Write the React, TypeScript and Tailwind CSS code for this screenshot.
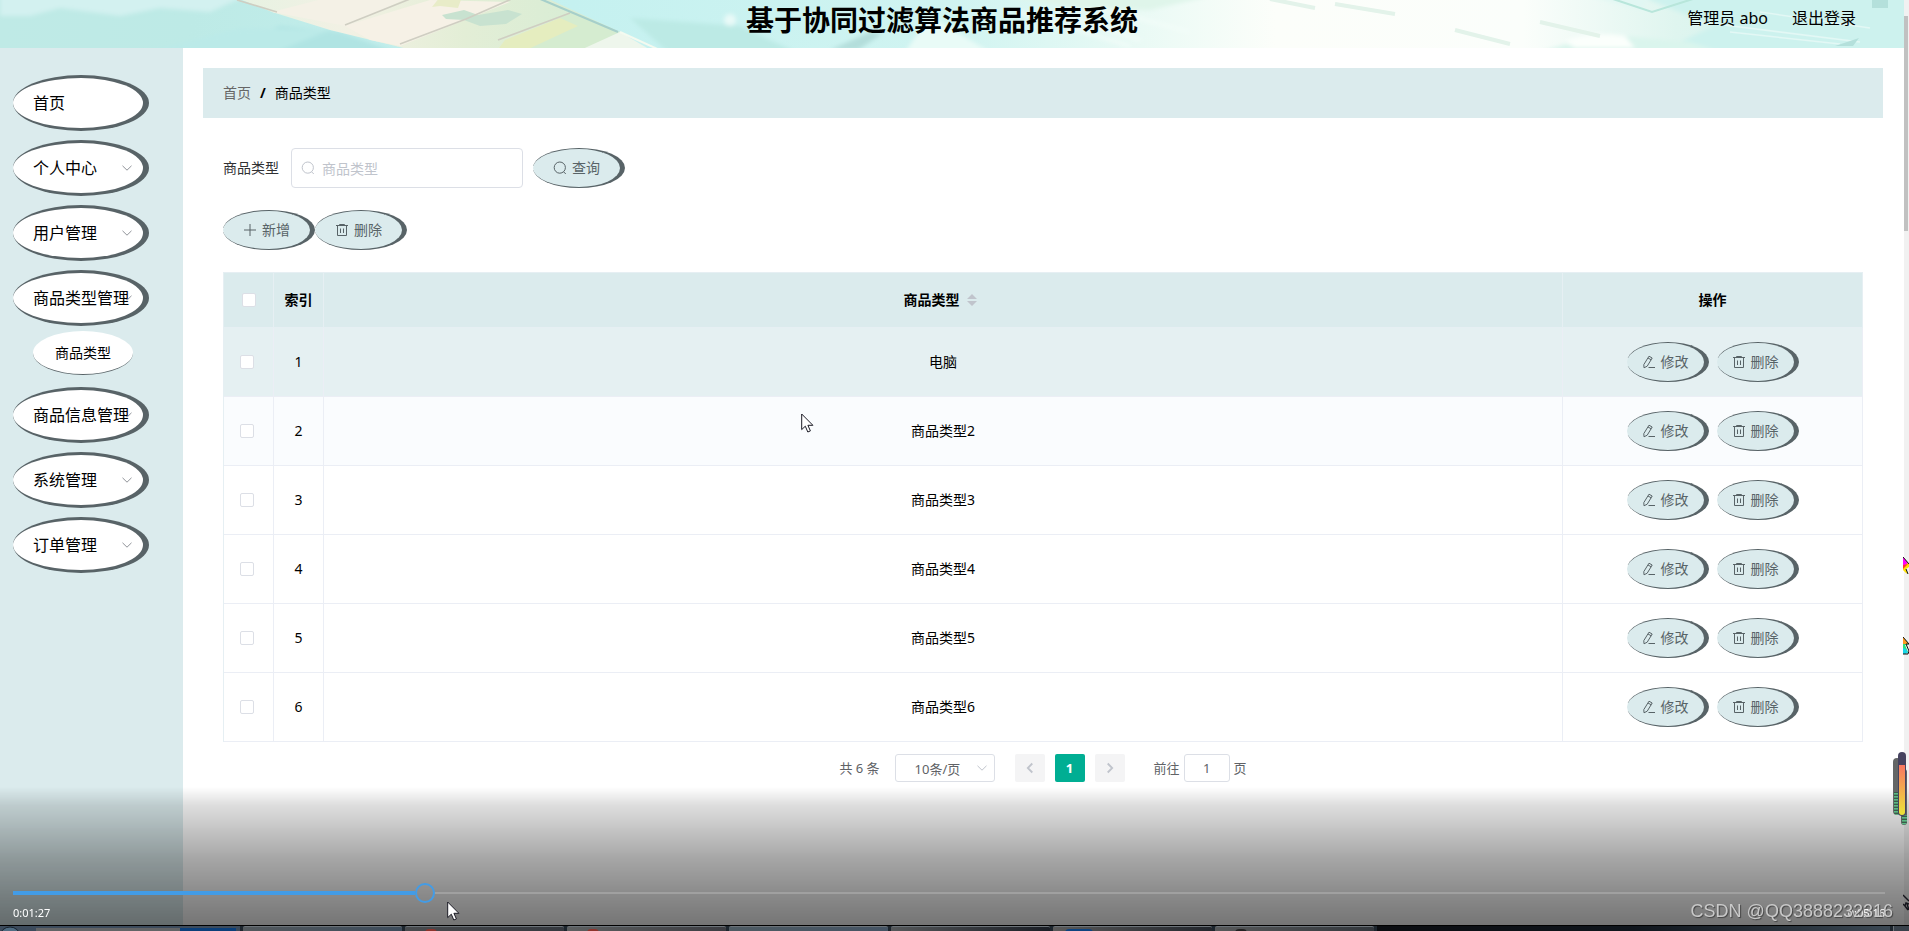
import type { ReactNode } from "react";

type MenuEntry = { label: string; arrow?: boolean; children?: string[] };

const menu: MenuEntry[] = [
  { label: "首页" },
  { label: "个人中心", arrow: true },
  { label: "用户管理", arrow: true },
  { label: "商品类型管理", arrow: true, children: ["商品类型"] },
  { label: "商品信息管理", arrow: true },
  { label: "系统管理", arrow: true },
  { label: "订单管理", arrow: true },
];

const rows = ["电脑", "商品类型2", "商品类型3", "商品类型4", "商品类型5", "商品类型6"];

function SearchIcon() {
  return (
    <svg viewBox="0 0 14 14" className="size-3.5 shrink-0" fill="none" stroke="currentColor">
      <circle cx="6.8" cy="6.6" r="5.6" />
      <path d="M10.6 10.8 12.8 13" />
    </svg>
  );
}

function PlusIcon() {
  return (
    <svg viewBox="0 0 14 14" className="size-3.5 shrink-0" fill="none" stroke="currentColor">
      <path d="M7 1v12M1 7h12" />
    </svg>
  );
}

function TrashIcon() {
  return (
    <svg viewBox="0 0 14 14" className="size-3.5 shrink-0" fill="none" stroke="currentColor">
      <path d="M1 2.5h12M2.5 2.5v10h9v-10M4.5 2.5v-1h5v1M5.5 5.5v4.5M8.5 5.5v4.5" />
    </svg>
  );
}

function EditIcon() {
  return (
    <svg viewBox="0 0 14 14" className="size-3.5 shrink-0" fill="none" stroke="currentColor">
      <path d="M7 1.2 10.2 3 5.2 11.2 2 12.8 1.8 9.6zM6 3l3.2 1.8M6.5 12.5h6.5" strokeLinejoin="round" />
    </svg>
  );
}

function ChevronDown({ className }: { className: string }) {
  return (
    <svg viewBox="0 0 12 12" className={className} fill="none" stroke="currentColor">
      <path d="M1.5 3.8 6 8.2l4.5-4.4" />
    </svg>
  );
}

function OvalButton({ children, wide }: { children: ReactNode; wide?: boolean }) {
  return (
    <button
      type="button"
      className={`flex h-10 shrink-0 items-center gap-[5px] rounded-[50%] border-y border-r-[5px] border-l-0 border-[#586367] bg-[#dbebed] text-sm leading-none whitespace-nowrap text-[#586367] ${wide ? "px-5" : "px-[15px]"}`}
    >
      {children}
    </button>
  );
}

function CheckBox({ label }: { label: string }) {
  return (
    <input
      type="checkbox"
      aria-label={label}
      className="block size-3.5 appearance-none rounded-[2px] border border-[#dcdfe6] bg-white checked:bg-[#00ae93]"
    />
  );
}

function HeaderArt() {
  return (
    <svg viewBox="0 0 1904 48" preserveAspectRatio="none" className="absolute inset-0 size-full" aria-hidden="true">
      <defs>
        <linearGradient id="sky" x1="0" x2="1" y1="0" y2="0">
          <stop offset="0" stopColor="#bfeae6" />
          <stop offset="0.1" stopColor="#bdeae6" />
          <stop offset="0.3" stopColor="#c5f1f0" />
          <stop offset="0.5" stopColor="#d0f4f1" />
          <stop offset="0.6" stopColor="#eafaf5" />
          <stop offset="0.67" stopColor="#fcfefa" />
          <stop offset="0.8" stopColor="#fbfefb" />
          <stop offset="0.88" stopColor="#dff5ef" />
          <stop offset="1" stopColor="#c6eeea" />
        </linearGradient>
        <linearGradient id="field" x1="0" x2="1" y1="0" y2="0">
          <stop offset="0" stopColor="#e6f2e2" />
          <stop offset="0.3" stopColor="#f2f1e4" />
          <stop offset="0.6" stopColor="#e3eed6" />
          <stop offset="1" stopColor="#d4ecd4" />
        </linearGradient>
        <filter id="soft" x="-5%" y="-20%" width="110%" height="140%">
          <feGaussianBlur stdDeviation="2" />
        </filter>
        <filter id="fine" x="-5%" y="-20%" width="110%" height="140%">
          <feGaussianBlur stdDeviation="0.7" />
        </filter>
      </defs>
      <rect width="1904" height="48" fill="url(#sky)" />
      <g filter="url(#soft)">
        <path d="M0-6h250l-40 18-50-4-40 8-60-8-30 8H0z" fill="#d3f1f0" />
        <path d="M200 54l80-28 60 6 60 22z" fill="#b0e4e3" />
        <path d="M140 54l100-26 90 2-60 24z" fill="#bbeae8" />
      </g>
      <g filter="url(#fine)">
        <path d="M232-4h310l78 36-20 20H420L330 30 272 12z" fill="url(#field)" />
        <path d="M345 26 430 0l80 2-110 44-30-6z" fill="#f6f1e6" />
        <path d="M272 12 330-3h80l-64 29z" fill="#f4f1e6" />
        <path d="M500 52 570 12l48 20-38 20z" fill="#d5ecd0" />
        <path d="M505 40 560 18l18 8-56 26h-26z" fill="#e5edbf" />
        <path d="M442 15l22-5 14 5 30-5 14 4-16 10-26 2-16-6-18-1z" fill="#c8e2d0" />
        <path d="M440-3h22l-4 11-18-2-8 1z" fill="#e8ecc8" />
        <path d="M345 25 415-3M400 44l66-25 48-21M498 40 570 13M237 0l40 12" fill="none" stroke="#cfcec2" strokeWidth="1.6" />
        <path d="M538-2l80 34" fill="none" stroke="#a6cfca" strokeWidth="2" />
        <path d="M576 52l44-20 34 20z" fill="#eef6ec" />
        <path d="M620 32l44 20" stroke="#f4faf0" strokeWidth="2" />
      </g>
      <g filter="url(#soft)">
        <path d="M630 18l110 8 60 28H670z" fill="#bceae5" />
        <circle cx="730" cy="20" r="6" fill="#e9faf8" />
        <path d="M830 50l40-18 12 2-24 16z" fill="#b4dedb" />
        <path d="M905 52 930 16l60 36z" fill="#e9fbf7" />
        <path d="M1000-4h210l-60 14-70-2z" fill="#dff5ea" />
        <path d="M1020 12l110 34M1060 14l80 26M1100 8l90 24" stroke="#f3fdf9" strokeWidth="3" />
        <path d="M1640-4h270v58h-256l60-28z" fill="#cdf2ee" />
        <path d="M1540 52l60-18 90 8 30 10z" fill="#daf5ed" />
        <path d="M1565 42q20-12 60-6l10 12h-60z" fill="#fbfffc" />
        <path d="M1590-4h60l-8 14z" fill="#e1f7f3" />
      </g>
      <g filter="url(#fine)" fill="none">
        <path d="M1270-1l45 9M1335 4l60 10M1455 30l55 14M1540 22l60 14" stroke="#e3f3ea" strokeWidth="4" />
        <path d="M1610-2l42 14 44-14" stroke="#b8e6db" strokeWidth="2" />
        <path d="M1700 22l160 20M1730 32l110 12M1760 12l110 16" stroke="#e3f8f5" strokeWidth="1.5" />
        <path d="M1835 46l24-8-6 8zM1872 0h16v8h-16z" fill="#b4e0db" />
      </g>
    </svg>
  );
}

function Header() {
  return (
    <header className="relative h-12 overflow-hidden">
      <HeaderArt />
      <div className="relative grid grid-cols-[1fr_auto_1fr] pr-5">
        <span />
        <h1 className="text-[28px] leading-10 font-bold whitespace-nowrap">基于协同过滤算法商品推荐系统</h1>
        <div className="flex justify-end gap-6 pr-7 text-base leading-9">
          <span>管理员 abo</span>
          <a href="#logout">退出登录</a>
        </div>
      </div>
    </header>
  );
}

function Sidebar() {
  return (
    <nav className="w-[183px] shrink-0 bg-[#dbebed] pt-[27px] pl-[13px]">
      <ul className="flex flex-col">
        {menu.map((m) => (
          <li key={m.label} className={m.children ? "mb-3" : "mb-[9px]"}>
            <a
              href="#menu"
              className="relative flex h-14 w-[136px] items-center rounded-[50%] border-y-[3px] border-r-[6px] border-l-0 border-[#586367] bg-white pl-5 text-base whitespace-nowrap"
            >
              {m.arrow && <ChevronDown className="absolute right-2.5 size-3 text-[#909399]" />}
              <span className="relative">{m.label}</span>
            </a>
            {m.children?.map((c) => (
              <a
                key={c}
                href="#submenu"
                className="mt-[5px] ml-5 flex h-11 w-[100px] items-center justify-center rounded-[50%] border-b border-[#586367] bg-white text-sm"
              >
                {c}
              </a>
            ))}
          </li>
        ))}
      </ul>
    </nav>
  );
}

const cell = "border-r border-b border-[#ebeef5] p-0";
const headCell = "border-r border-b border-[#e6eff3] p-0 font-bold";

function DataTable() {
  return (
    <table className="w-full table-fixed border-separate border-spacing-0 border-t border-l border-[#e6eff3] text-center text-sm">
      <colgroup>
        <col className="w-[50px]" />
        <col className="w-[50px]" />
        <col />
        <col className="w-[300px]" />
      </colgroup>
      <thead className="bg-[#dbebed]">
        <tr className="h-[55px]">
          <th className={headCell}>
            <div className="flex justify-center">
              <CheckBox label="全选" />
            </div>
          </th>
          <th className={headCell}>索引</th>
          <th className={headCell}>
            <button type="button" className="inline-flex items-center gap-[7px] pr-1.5 font-bold">
              商品类型
              <svg viewBox="0 0 10 12" className="h-3 w-2.5" fill="#c0c4cc">
                <path d="M5 0l5 5H0zM5 12l5-5H0z" />
              </svg>
            </button>
          </th>
          <th className={headCell}>操作</th>
        </tr>
      </thead>
      <tbody>
        {rows.map((name, i) => (
          <tr key={name} className={`h-[69px] ${i === 0 ? "bg-[#e5f0f2]" : i === 1 ? "bg-[#fafcfe]" : "bg-white"}`}>
            <td className={cell}>
              <div className="flex pl-4">
                <CheckBox label={`选择${name}`} />
              </div>
            </td>
            <td className={cell}>{i + 1}</td>
            <td className={cell}>{name}</td>
            <td className={cell}>
              <div className="flex justify-center gap-2">
                <OvalButton>
                  <EditIcon />
                  修改
                </OvalButton>
                <OvalButton>
                  <TrashIcon />
                  删除
                </OvalButton>
              </div>
            </td>
          </tr>
        ))}
      </tbody>
    </table>
  );
}

function Pagination() {
  return (
    <div className="flex items-center justify-center pt-3 text-[13px] leading-7 text-[#606266]">
      <span>共 6 条</span>
      <div className="relative ml-[15px]">
        <select
          aria-label="每页条数"
          className="block h-7 w-[100px] appearance-none rounded-[3px] border border-[#dcdfe6] bg-white pl-[19px]"
        >
          <option>10条/页</option>
        </select>
        <ChevronDown className="pointer-events-none absolute top-2 right-[7px] size-3 text-[#c0c4cc]" />
      </div>
      <button type="button" aria-label="上一页" className="ml-5 flex h-7 w-[30px] items-center justify-center rounded-[2px] bg-[#f4f4f5] text-[#c0c4cc]">
        <svg viewBox="0 0 12 12" className="size-3" fill="none" stroke="currentColor" strokeWidth="1.8">
          <path d="M8.3 1.5 3.8 6l4.5 4.5" />
        </svg>
      </button>
      <button type="button" className="ml-2.5 h-7 w-[30px] rounded-[2px] bg-[#00ae93] font-bold text-white">1</button>
      <button type="button" aria-label="下一页" className="ml-2.5 flex h-7 w-[30px] items-center justify-center rounded-[2px] bg-[#f4f4f5] text-[#c0c4cc]">
        <svg viewBox="0 0 12 12" className="size-3" fill="none" stroke="currentColor" strokeWidth="1.8">
          <path d="M3.7 1.5 8.2 6l-4.5 4.5" />
        </svg>
      </button>
      <label className="ml-[29px] flex items-center gap-1">
        前往
        <input type="text" defaultValue="1" className="h-7 w-[46px] rounded-[3px] border border-[#dcdfe6] bg-white text-center" />
        页
      </label>
    </div>
  );
}

function Pointer({ className }: { className: string }) {
  return (
    <svg viewBox="0 0 13 20" className={className} fill="#fff" stroke="#1a1a24">
      <path d="M.7 1v15.6l3.6-3.4 2.5 5.8 2.6-1.1-2.5-5.6h5z" />
    </svg>
  );
}

function LevelWidget() {
  return (
    <svg viewBox="0 0 16 76" className="pointer-events-none fixed right-0 bottom-[104px] z-20 h-[76px] w-4" aria-hidden="true">
      <defs>
        <linearGradient id="level" x1="0" x2="0" y1="0" y2="1">
          <stop offset="0" stopColor="#f97762" />
          <stop offset="1" stopColor="#ece438" />
        </linearGradient>
        <pattern id="stripes" width="8" height="3" patternUnits="userSpaceOnUse">
          <rect width="8" height="3" fill="#3a5a48" />
          <rect width="8" height="1.6" fill="#5cb883" />
        </pattern>
      </defs>
      <rect x="8" y="18" width="6" height="56" rx="3" fill="#5c5f60" />
      <path d="M9 64h5v7a3 3 0 0 1-5 2z" fill="url(#stripes)" />
      <rect x="0" y="7" width="8" height="57" rx="4" fill="#646666" />
      <path d="M1 41h6v20a3 3 0 0 1-6 0z" fill="url(#stripes)" />
      <rect x="5" y="1" width="8" height="64" rx="4" fill="#46435f" />
      <path d="M6 14h6v47a3 3 0 0 1-6 0z" fill="url(#level)" />
    </svg>
  );
}

function EdgePointers() {
  return (
    <div className="pointer-events-none fixed top-0 right-0 z-20 h-full w-1.5" aria-hidden="true">
      <svg viewBox="0 0 6 100" className="absolute top-[556px] h-[100px] w-1.5">
        <path d="M0 1l6 7v3L3 13l2 5-2-1-3-3z" fill="#ffe100" />
        <path d="M0 1l5 6-5 3z" fill="#f0f" />
        <path d="M0 9l5-1-5 5z" fill="#f33" />
        <path d="M0 1l6 7M3 13l2 5" stroke="#111" fill="none" />
        <path d="M0 81l6 7-4 1 3 7-3 2-2-1z" fill="#2fe07a" />
        <path d="M0 81l6 7H0z" fill="#ff9a1f" />
        <path d="M0 92l3 1 2 4-5 1z" fill="#18d5e8" />
        <path d="M0 81l6 7H3l3 7-1 3H0" stroke="#111" fill="none" />
      </svg>
      <svg viewBox="0 0 6 18" className="absolute bottom-[19px] h-[18px] w-1.5" stroke="#15151c" strokeWidth="1.4" fill="none">
        <path d="M0 1l6 6M0 10l2 2 1-3 3 1M2 12l3 4M4 10l2 6" />
      </svg>
    </div>
  );
}

function Taskbar() {
  return (
    <div className="flex h-1.5 gap-[3px] overflow-hidden border-t border-black bg-[#1d262e]" aria-hidden="true">
      <div className="flex w-60 shrink-0 gap-0 bg-[#3c4b5c]">
        <svg viewBox="0 0 36 5" className="h-[5px] w-9">
          <ellipse cx="10" cy="10" rx="10" ry="9" fill="#4f6c82" stroke="#17222e" />
        </svg>
        <div className="mt-0.5 w-36 bg-[#626466]" />
        <div className="mt-0.5 w-14 bg-[#0b3f7a]" />
      </div>
      <div className="w-[159px] shrink-0 rounded-t-[2px] border-t border-[#6b7278] bg-linear-to-r from-[#53595d] to-[#3d4c5b]" />
      <div className="flex w-[159px] shrink-0 rounded-t-[2px] border-t border-[#6b7278] bg-linear-to-r from-[#484b4e] to-[#35393f] pl-5">
        <div className="mt-0.5 h-1 w-3 rounded-t-full bg-[#8e342c]" />
      </div>
      <div className="flex w-[159px] shrink-0 rounded-t-[2px] border-t border-[#6b7278] bg-linear-to-r from-[#5d6061] to-[#3c3d42] pl-5">
        <div className="mt-0.5 h-1 w-3 rounded-t-full bg-[#8e342c]" />
      </div>
      <div className="w-[159px] shrink-0 rounded-t-[2px] border-t border-[#6b7278] bg-linear-to-r from-[#4e5b63] to-[#455464]" />
      <div className="w-[159px] shrink-0 rounded-t-[2px] border-t border-[#6b7278] bg-linear-to-r from-[#55585a] to-[#1b1f26]" />
      <div className="flex w-[159px] shrink-0 rounded-t-[2px] border-t border-[#6b7278] bg-linear-to-r from-[#5a5a5a] to-[#23272d] pl-3">
        <div className="mt-0.5 h-1 w-7 rounded-t-full bg-[#0d4380]" />
      </div>
      <div className="flex w-[159px] shrink-0 rounded-t-[2px] border-t border-[#6b7278] bg-linear-to-r from-[#57595a] to-[#33383d] pl-5">
        <div className="mt-0.5 h-1 w-3 rounded-t-full bg-[#222]" />
      </div>
      <div className="flex-1 bg-linear-to-r from-[#0b0d11] via-[#10161d] to-[#3b4853]" />
      <div className="w-4 border-l border-[#6b7278] bg-[#39424b]" />
    </div>
  );
}

function PlayerOverlay() {
  return (
    <div className="fixed inset-x-0 bottom-0 z-10">
      <div className="relative h-[138px] bg-[linear-gradient(to_bottom,rgba(0,0,0,0)_0%,rgba(0,0,0,0.13)_13%,rgba(0,0,0,0.35)_52%,rgba(0,0,0,0.45)_76%,rgba(0,0,0,0.54)_100%)] pt-24 pr-6 pl-[13px]">
        <input
          type="range"
          aria-label="播放进度"
          min={0}
          max={1000}
          defaultValue={217}
          className="block h-5 w-full appearance-none bg-transparent bg-[linear-gradient(to_right,#439ce6_402px,transparent_402px),linear-gradient(#a0a0a0,#a0a0a0)] bg-[length:100%_4px,calc(100%-421px)_2px] bg-[position:0_center,right_center] bg-no-repeat [&::-webkit-slider-thumb]:size-5 [&::-webkit-slider-thumb]:appearance-none [&::-webkit-slider-thumb]:rounded-full [&::-webkit-slider-thumb]:border-2 [&::-webkit-slider-thumb]:border-[#439ce6] [&::-webkit-slider-thumb]:bg-transparent"
        />
        <div className="flex justify-between text-[11px] leading-5 text-white">
          <span>0:01:27</span>
          <span>0:05:16</span>
        </div>
        <p className="absolute right-4 bottom-0 font-['Liberation_Sans',sans-serif] text-lg leading-7 text-[#c9c9c9] [text-shadow:1px_1px_1px_#444]">
          CSDN @QQ3888232316
        </p>
      </div>
      <Taskbar />
    </div>
  );
}

export default function App() {
  return (
    <div className="flex min-h-screen bg-white font-['Noto_Sans','Noto_Sans_CJK_SC',sans-serif] text-black">
      <div className="flex min-w-0 flex-1 flex-col">
        <Header />
        <div className="flex flex-1">
          <Sidebar />
          <main className="min-w-0 flex-1 py-5 pr-[21px] pl-5">
            <nav className="flex h-[50px] items-center gap-[9px] bg-[#dbebed] px-5 text-sm" aria-label="路径">
              <a href="#home" className="text-[#666]">首页</a>
              <span className="font-bold">/</span>
              <span>商品类型</span>
            </nav>
            <div className="px-5 pt-[30px]">
              <form className="flex items-center" onSubmit={(e) => e.preventDefault()}>
                <label htmlFor="type" className="text-sm text-[#303133]">商品类型</label>
                <div className="relative mr-2.5 ml-3 w-[232px]">
                  <span className="pointer-events-none absolute top-[13px] left-2.5 text-[#c0c4cc]">
                    <SearchIcon />
                  </span>
                  <input
                    id="type"
                    type="text"
                    placeholder="商品类型"
                    className="block h-10 w-full rounded border border-[#dcdfe6] bg-white pr-4 pl-[30px] text-sm placeholder:text-[#c0c4cc]"
                  />
                </div>
                <OvalButton wide>
                  <SearchIcon />
                  查询
                </OvalButton>
              </form>
              <div className="flex py-[22px]">
                <OvalButton wide>
                  <PlusIcon />
                  新增
                </OvalButton>
                <OvalButton wide>
                  <TrashIcon />
                  删除
                </OvalButton>
              </div>
              <DataTable />
              <Pagination />
            </div>
          </main>
        </div>
      </div>
      <div className="w-[5px] shrink-0 bg-[#f1f1f1] pt-4" aria-hidden="true">
        <div className="h-[215px] w-1 bg-[#c1c1c1]" />
      </div>
      <PlayerOverlay />
      <Pointer className="pointer-events-none fixed top-[413px] left-[801px] z-20 h-5 w-[13px]" />
      <Pointer className="pointer-events-none fixed bottom-2.5 left-[447px] z-20 h-5 w-[13px]" />
      <LevelWidget />
      <EdgePointers />
    </div>
  );
}
